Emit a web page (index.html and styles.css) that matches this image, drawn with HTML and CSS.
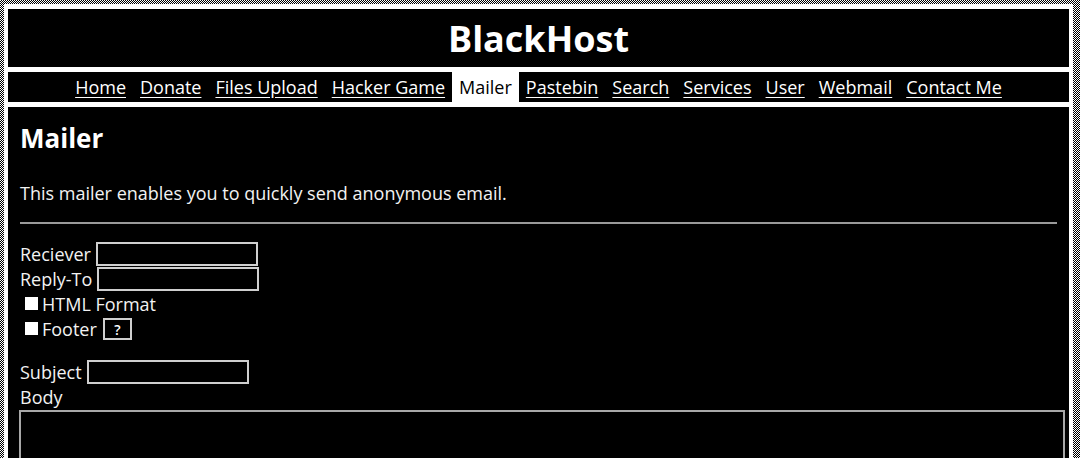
FILE: index.html
```html
<!DOCTYPE html>
<html lang="en">
<head>
    <meta charset="UTF-8">
    <title>BlackHost - Mailer</title>
    <link rel="stylesheet" href="styles.css">
</head>
<body>
    <div class="frame">
        <header class="site-header">
            <h1>BlackHost</h1>
        </header>

        <nav class="site-nav">
            <a href="#">Home</a>
            <a href="#">Donate</a>
            <a href="#">Files Upload</a>
            <a href="#">Hacker Game</a>
            <a href="#" class="active">Mailer</a>
            <a href="#">Pastebin</a>
            <a href="#">Search</a>
            <a href="#">Services</a>
            <a href="#">User</a>
            <a href="#">Webmail</a>
            <a href="#">Contact Me</a>
        </nav>

        <main class="content">
            <h2>Mailer</h2>
            <p class="intro">This mailer enables you to quickly send anonymous email.</p>
            <hr>

            <form class="mail-form">
                <div class="row">Reciever <input type="text" class="field"></div>
                <div class="row">Reply-To <input type="text" class="field"></div>
                <div class="row check"><span class="box"></span>HTML Format</div>
                <div class="row check"><span class="box"></span>Footer <button type="button" class="help">?</button></div>

                <div class="row subject">Subject <input type="text" class="field"></div>
                <div class="row">Body</div>
                <textarea class="body-text"></textarea>
            </form>
        </main>
    </div>
</body>
</html>
```

FILE: styles.css
```css
* {
    margin: 0;
    padding: 0;
    box-sizing: border-box;
}

html {
    overflow: hidden;
}

body {
    font-family: 'Open Sans', 'Noto Sans', Arial, sans-serif;
    color: #f2f2f2;
    background: repeating-conic-gradient(#000 0 25%, #fff 0 50%) 0 0 / 2px 2px;
    padding: 4px 7px 0 4px;
    height: 458px;
    overflow: hidden;
}

.frame {
    background-color: #fff;
    padding: 5px 4px 0 4px;
    display: flex;
    flex-direction: column;
    gap: 5px;
    height: 100%;
}

.site-header {
    background-color: #000;
    height: 58px;
    flex-shrink: 0;
    display: flex;
    justify-content: center;
    align-items: center;
}

.site-header h1 {
    font-size: 36px;
    font-weight: 700;
    color: #fff;
}

.site-nav {
    background-color: #000;
    height: 30px;
    flex-shrink: 0;
    display: flex;
    justify-content: center;
    align-items: stretch;
}

.site-nav a {
    color: #fff;
    font-size: 18px;
    padding: 0 7px;
    display: flex;
    align-items: center;
    text-underline-offset: 3px;
}

.site-nav a.active {
    background-color: #fff;
    color: #000;
    text-decoration: none;
}

.content {
    background-color: #000;
    flex: 1;
    min-height: 0;
    overflow: hidden;
    padding: 14px 12px 0 12px;
    font-size: 18px;
}

.content h2 {
    font-size: 26px;
    font-weight: 700;
    color: #fff;
    line-height: 34px;
}

.intro {
    margin-top: 25px;
    line-height: 26px;
}

hr {
    border: none;
    border-top: 2px solid #9a9a9a;
    margin: 16px 0 17px;
}

.row {
    display: flex;
    align-items: center;
    height: 25px;
}

.field {
    background-color: #000;
    border: 2px solid #cfcfcf;
    width: 162px;
    height: 24px;
    margin-left: 5px;
}

.check .box {
    width: 13px;
    height: 13px;
    background-color: #fff;
    margin: 0 4px 0 5px;
}

.help {
    background-color: #000;
    color: #fff;
    border: 2px solid #cfcfcf;
    font-family: inherit;
    font-size: 14px;
    font-weight: 600;
    width: 29px;
    height: 22px;
    margin-left: 6px;
}

.subject {
    margin-top: 18px;
}

.body-text {
    display: block;
    background-color: #000;
    border: 2px solid #a8a8a8;
    width: calc(100% + 9px);
    margin-left: -1px;
    margin-top: 1px;
    height: 120px;
    resize: none;
}
```
